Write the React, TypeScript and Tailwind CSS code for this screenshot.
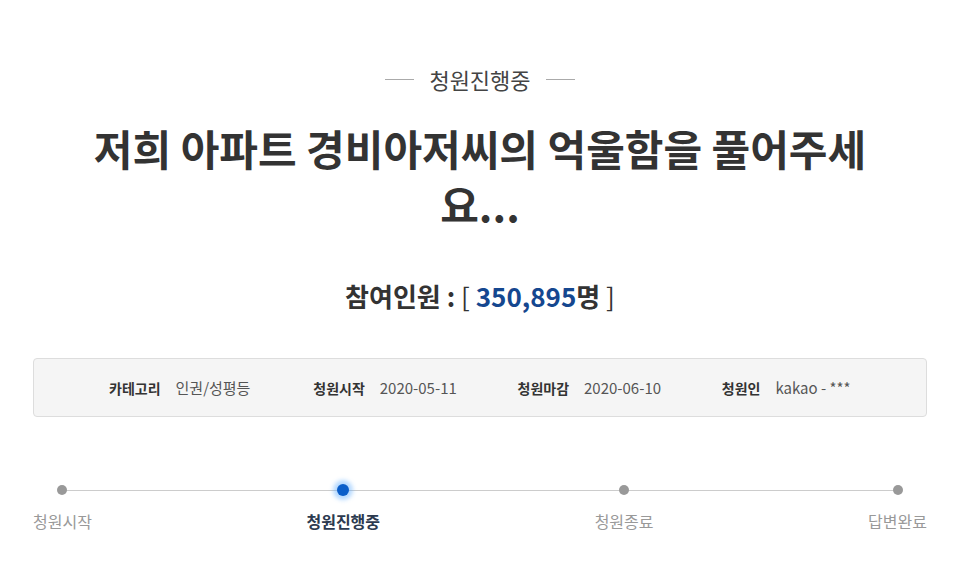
const steps = [
  {label: '청원시작', active: false},
  {label: '청원진행중', active: true},
  {label: '청원종료', active: false},
  {label: '답변완료', active: false},
]

const info = [
  {label: '카테고리', value: '인권/성평등'},
  {label: '청원시작', value: '2020-05-11'},
  {label: '청원마감', value: '2020-06-10'},
  {label: '청원인', value: 'kakao - ***'},
]

const App = () => {
  return (
    <div className="min-h-[585px] bg-white font-['Noto_Sans_CJK_KR','Noto_Sans',sans-serif] text-[#333] pt-[64px]">
      <div className="flex items-center justify-center gap-[15px]">
        <span className="w-[29px] h-px bg-[#aaa]" />
        <span className="text-[22px] leading-[30px] text-[#444]">청원진행중</span>
        <span className="w-[29px] h-px bg-[#aaa]" />
      </div>

      <h1 className="mt-[26px] mx-auto max-w-[800px] text-center text-[42px] leading-[56px] font-bold text-[#333]">
        저희 아파트 경비아저씨의 억울함을 풀어주세요...
      </h1>

      <h2 className="mt-[46px] text-center text-[26px] leading-[36px] font-bold text-[#333]">
        참여인원 : <span className="font-normal">[</span> <span className="text-[#15478f]">350,895</span>명 <span className="font-normal">]</span>
      </h2>

      <div className="mt-[44px] mx-[33px] h-[59px] rounded-[4px] border border-[#ddd] bg-[#f5f5f5] flex items-center pl-[75px]">
        {info.map(item => (
          <div key={item.label} className="w-[206px] flex items-center gap-[15px] text-[14px] leading-[20px]">
            <span className="font-bold text-[#333]">{item.label}</span>
            <span className="text-[#555] text-[15px]">{item.value}</span>
          </div>
        ))}
      </div>

      <div className="relative mt-[67px] mx-[33px] flex justify-between">
        <div className="absolute left-[29px] right-[30px] top-[6px] h-px bg-[#ccc]" />
        {steps.map(step => (
          <div key={step.label} className="relative flex flex-col items-center">
            <div className="h-[12px] flex items-center justify-center">
              {step.active ? (
                <span className="w-[12px] h-[12px] rounded-full bg-[#0b5ec9] shadow-[0_0_4px_4px_rgba(90,170,255,0.45)]" />
              ) : (
                <span className="w-[10px] h-[10px] rounded-full bg-[#999]" />
              )}
            </div>
            <span
              className={
                step.active
                  ? 'mt-[14px] text-[16px] leading-[22px] font-bold text-[#2c3a4f]'
                  : 'mt-[14px] text-[16px] leading-[22px] text-[#999]'
              }
            >
              {step.label}
            </span>
          </div>
        ))}
      </div>
    </div>
  )
}

export default App
